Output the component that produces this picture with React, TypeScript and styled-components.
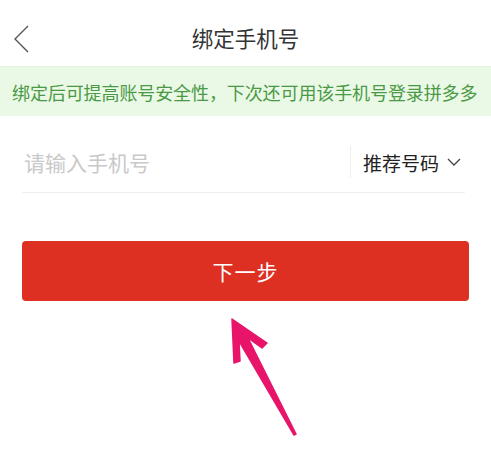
import React from "react";
import styled, { createGlobalStyle } from "styled-components";

const Global = createGlobalStyle`
  html, body { margin: 0; padding: 0; background: #fff; }
  body { font-family: "Noto Sans CJK SC", "Noto Sans", sans-serif; }
`;

const Page = styled.div`
  width: 491px;
  height: 456px;
  background: #fff;
  display: flex;
  flex-direction: column;
  position: relative;
  overflow: hidden;
`;

const Header = styled.div`
  height: 66px;
  display: flex;
  align-items: center;
  justify-content: center;
  position: relative;
  box-sizing: border-box;
  padding-top: 8px;
`;

const BackBtn = styled.div`
  position: absolute;
  left: 12px;
  top: 24px;
  width: 20px;
  height: 30px;
`;

const Title = styled.div`
  font-size: 21.5px;
  color: #333;
`;

const Banner = styled.div`
  height: 49px;
  background: #eaf8e6;
  border-top: 1px solid #e2f3de;
  display: flex;
  align-items: center;
  padding-left: 12px;
  font-size: 18px;
  color: #4a9a45;
  white-space: nowrap;
  letter-spacing: -0.1px;
`;

const Form = styled.div`
  padding: 0 22px;
  display: flex;
  flex-direction: column;
`;

const InputRow = styled.div`
  height: 77px;
  display: flex;
  align-items: center;
  border-bottom: 1px solid #efefef;
  box-sizing: border-box;
  padding-top: 20px;
  padding-bottom: 4px;
  margin-right: 4px;
`;

const Placeholder = styled.div`
  flex: 1;
  font-size: 21px;
  color: #c9c9c9;
  padding-left: 2px;
`;

const Divider = styled.div`
  width: 1px;
  height: 32px;
  background: #eeeeee;
  margin-right: 12px;
`;

const Picker = styled.div`
  display: flex;
  align-items: center;
  gap: 8px;
  font-size: 19px;
  color: #222;
  padding-right: 4px;
`;

const NextButton = styled.div`
  margin-top: 48px;
  height: 60px;
  border-radius: 4px;
  background: #dd2f22;
  color: #fff;
  display: flex;
  align-items: center;
  justify-content: center;
  font-size: 21px;
  letter-spacing: 1px;
`;

const Arrow = styled.svg`
  position: absolute;
  left: 220px;
  top: 310px;
  width: 90px;
  height: 135px;
`;

export default function App() {
  return (
    <>
      <Global />
      <Page>
        <Header>
          <BackBtn>
            <svg width="20" height="30" viewBox="0 0 20 30">
              <polyline points="16,2 3,15 16,28" fill="none" stroke="#555" strokeWidth="1.4" />
            </svg>
          </BackBtn>
          <Title>绑定手机号</Title>
        </Header>
        <Banner>绑定后可提高账号安全性，下次还可用该手机号登录拼多多</Banner>
        <Form>
          <InputRow>
            <Placeholder>请输入手机号</Placeholder>
            <Divider />
            <Picker>
              推荐号码
              <svg width="14" height="9" viewBox="0 0 14 9">
                <polyline points="1,1 7,7 13,1" fill="none" stroke="#444" strokeWidth="1.3" />
              </svg>
            </Picker>
          </InputRow>
          <NextButton>下一步</NextButton>
        </Form>
        <Arrow viewBox="0 0 90 135">
          <path
            d="M12 9 L14 53 L20 51 L19 31 L74 125 L76 124 L28 28 L42 38 L47 33 Z"
            fill="#e8146a"
            stroke="#e8146a"
            strokeWidth="1.5"
            strokeLinejoin="round"
          />
        </Arrow>
      </Page>
    </>
  );
}
